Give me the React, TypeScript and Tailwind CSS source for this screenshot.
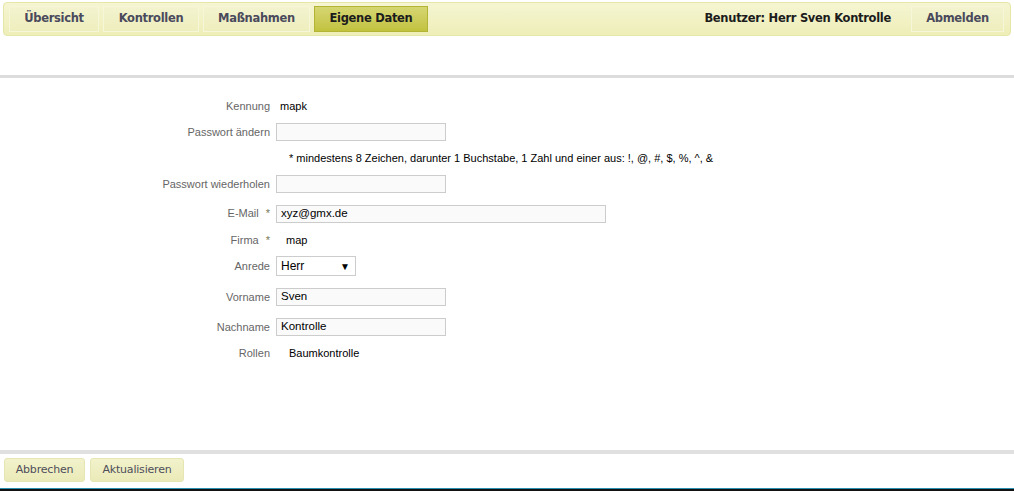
import React from 'react'

const tabs = [
  { label: 'Übersicht', w: 90 },
  { label: 'Kontrollen', w: 96 },
  { label: 'Maßnahmen', w: 107 },
  { label: 'Eigene Daten', w: 114 },
]

function Tab({ label, w, active }: { label: string; w: number; active?: boolean }) {
  return (
    <div
      className={
        active
          ? 'h-[26px] flex items-center justify-center border border-[#b3b336] bg-gradient-to-b from-[#d6d672] to-[#c2c23e] text-[#1c1c1c]'
          : 'h-[26px] flex items-center justify-center border border-[#f6f6d8] bg-gradient-to-b from-[#f3f3cf] to-[#eeeebd] text-[#4a4a5c]'
      }
      style={{ width: w }}
    >
      {label}
    </div>
  )
}

function Field({ w, value }: { w: number; value?: string }) {
  return (
    <div
      className="h-[18px] border border-[#cccccc] bg-[#fafafa] pl-[4px] flex items-center text-black text-[11.5px]"
      style={{ width: w }}
    >
      {value}
    </div>
  )
}

function Row({ h, label, star, children }: { h: number; label?: string; star?: boolean; children?: React.ReactNode }) {
  return (
    <div className="flex items-center" style={{ height: h }}>
      <div className="w-[270px] text-right text-[#666666]">
        {label}
        {star && <span className="ml-[7px] text-[#7a7a55]">*</span>}
      </div>
      <div className="pl-[6px] flex items-center">{children}</div>
    </div>
  )
}

export default function App() {
  return (
    <div className="w-[1014px] h-[491px] bg-white flex flex-col overflow-hidden">
      <div className="mt-[2px] mx-[3px] h-[34px] rounded-[4px] border border-[#e6e6a8] bg-gradient-to-b from-[#f5f5d2] to-[#eeeeb8] flex items-center px-[5px] font-['DejaVu_Sans',sans-serif] font-bold text-[11.5px] tracking-[-0.3px]">
        <div className="flex gap-[4px]">
          {tabs.map(t => (
            <Tab key={t.label} label={t.label} w={t.w} active={t.label === 'Eigene Daten'} />
          ))}
        </div>
        <div className="ml-auto flex items-center">
          <span className="text-[#1c1c1c] mr-[20px]">Benutzer: Herr Sven Kontrolle</span>
          <Tab label="Abmelden" w={93} />
          <div className="w-[1px]" />
        </div>
      </div>

      <div className="mt-[39px] h-[3px] bg-[#dcdcdc]" />

      <div className="flex-1 pt-[15px] font-['Liberation_Sans',Arial,sans-serif] text-[11px]">
        <Row h={26} label="Kennung">
          <span className="text-black pl-[4px]">mapk</span>
        </Row>
        <Row h={26} label="Passwort ändern">
          <Field w={170} />
        </Row>
        <Row h={26}>
          <span className="text-black pl-[13px]">
            * mindestens 8 Zeichen, darunter 1 Buchstabe, 1 Zahl und einer aus: !, @, #, $, %, ^, &amp;
          </span>
        </Row>
        <Row h={26} label="Passwort wiederholen">
          <Field w={170} />
        </Row>
        <Row h={33} label="E-Mail" star>
          <Field w={330} value="xyz@gmx.de" />
        </Row>
        <Row h={20} label="Firma" star>
          <span className="text-black pl-[10px]">map</span>
        </Row>
        <Row h={32} label="Anrede">
          <div className="w-[80px] h-[20px] border border-[#cccccc] bg-white flex items-center justify-between pl-[4px] pr-[5px] text-black text-[12px]">
            <span>Herr</span>
            <span className="text-[10px]">▼</span>
          </div>
        </Row>
        <Row h={30} label="Vorname">
          <Field w={170} value="Sven" />
        </Row>
        <Row h={30} label="Nachname">
          <Field w={170} value="Kontrolle" />
        </Row>
        <Row h={22} label="Rollen">
          <span className="text-black pl-[13px]">Baumkontrolle</span>
        </Row>
      </div>

      <div className="h-[4px] bg-[#e0e0e0]" />
      <div className="flex gap-[5px] px-[4px] pt-[4px] pb-[6px] font-['DejaVu_Sans',sans-serif] text-[11px] tracking-[-0.2px] text-[#4e4e5a]">
        <div className="w-[81px] h-[24px] flex items-center justify-center rounded-[3px] border border-[#e6e6b4] bg-gradient-to-b from-[#f2f2cc] to-[#eaeab8]">Abbrechen</div>
        <div className="w-[94px] h-[24px] flex items-center justify-center rounded-[3px] border border-[#e6e6b4] bg-gradient-to-b from-[#f2f2cc] to-[#eaeab8]">Aktualisieren</div>
      </div>
      <div className="h-[3px] bg-[#111111] border-t border-[#2a8fb0]" />
    </div>
  )
}
